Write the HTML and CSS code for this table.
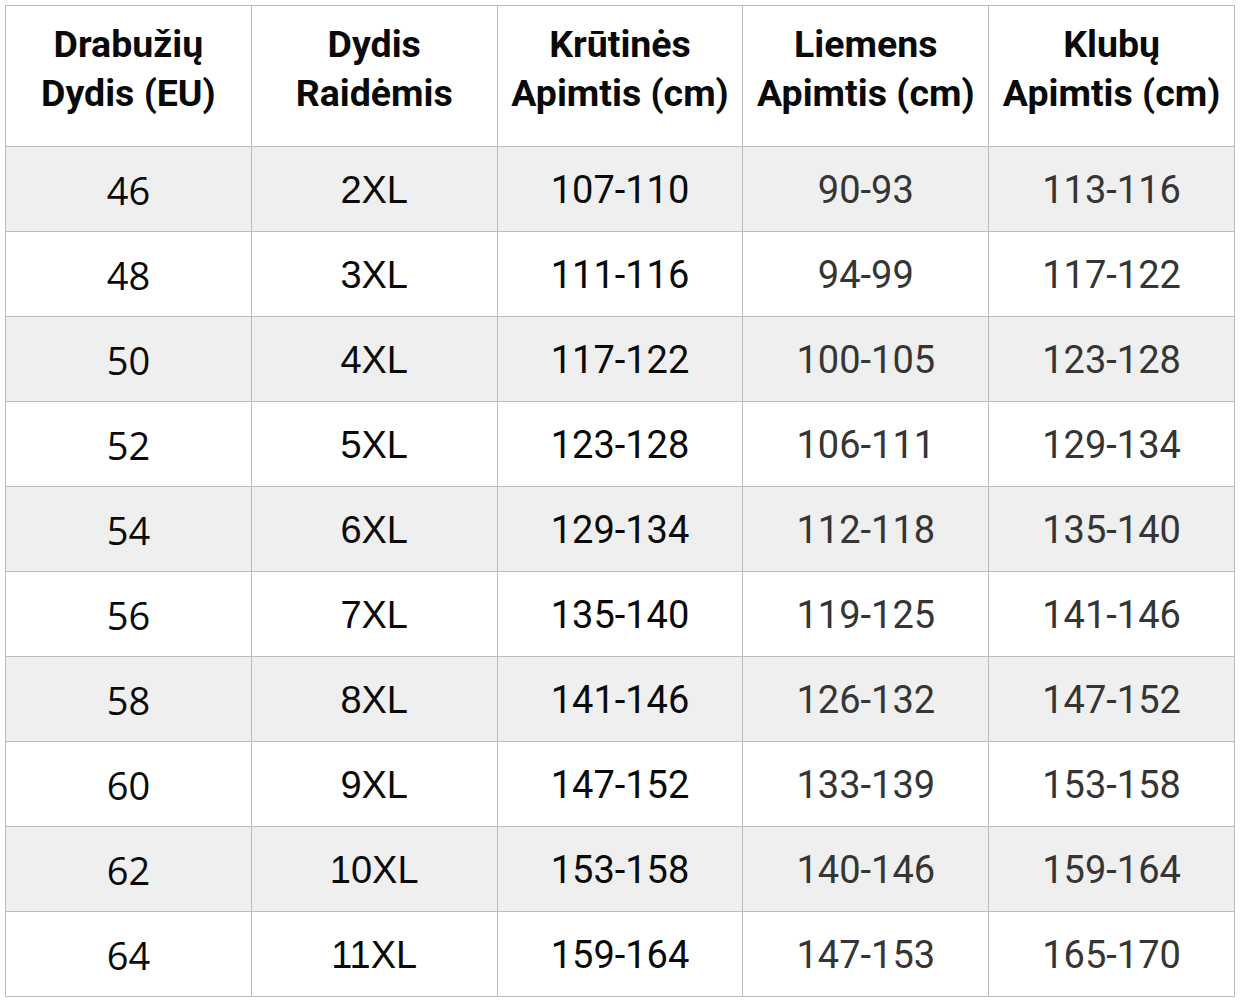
FILE: index.html
```html
<!DOCTYPE html>
<html lang="lt">
<head>
<meta charset="utf-8">
<title>Dydžių lentelė</title>
<link rel="stylesheet" href="styles.css">
</head>
<body>
<table class="size-table">
  <thead>
    <tr>
      <th>Drabužių<br>Dydis (EU)</th>
      <th>Dydis<br>Raidėmis</th>
      <th>Krūtinės<br>Apimtis (cm)</th>
      <th>Liemens<br>Apimtis (cm)</th>
      <th>Klubų<br>Apimtis (cm)</th>
    </tr>
  </thead>
  <tbody>
    <tr><td class="c1">46</td><td class="c2">2XL</td><td class="c3">107-110</td><td class="c4">90-93</td><td class="c4">113-116</td></tr>
    <tr><td class="c1">48</td><td class="c2">3XL</td><td class="c3">111-116</td><td class="c4">94-99</td><td class="c4">117-122</td></tr>
    <tr><td class="c1">50</td><td class="c2">4XL</td><td class="c3">117-122</td><td class="c4">100-105</td><td class="c4">123-128</td></tr>
    <tr><td class="c1">52</td><td class="c2">5XL</td><td class="c3">123-128</td><td class="c4">106-111</td><td class="c4">129-134</td></tr>
    <tr><td class="c1">54</td><td class="c2">6XL</td><td class="c3">129-134</td><td class="c4">112-118</td><td class="c4">135-140</td></tr>
    <tr><td class="c1">56</td><td class="c2">7XL</td><td class="c3">135-140</td><td class="c4">119-125</td><td class="c4">141-146</td></tr>
    <tr><td class="c1">58</td><td class="c2">8XL</td><td class="c3">141-146</td><td class="c4">126-132</td><td class="c4">147-152</td></tr>
    <tr><td class="c1">60</td><td class="c2">9XL</td><td class="c3">147-152</td><td class="c4">133-139</td><td class="c4">153-158</td></tr>
    <tr><td class="c1">62</td><td class="c2">10XL</td><td class="c3">153-158</td><td class="c4">140-146</td><td class="c4">159-164</td></tr>
    <tr><td class="c1">64</td><td class="c2">11XL</td><td class="c3">159-164</td><td class="c4">147-153</td><td class="c4">165-170</td></tr>
  </tbody>
</table>
</body>
</html>
```
FILE: styles.css
```css
html, body {
  margin: 0;
  padding: 0;
  background: #ffffff;
}
body {
  padding: 5px 0 0 5px;
}
.size-table {
  border-collapse: collapse;
  table-layout: fixed;
  width: 1230px;
  font-family: Roboto, "Liberation Sans", sans-serif;
}
.size-table th,
.size-table td {
  border: 1px solid #bcbcbc;
  text-align: center;
  vertical-align: middle;
  padding: 0;
  width: 20%;
  box-sizing: border-box;
}
.size-table th {
  height: 141px;
  font-size: 37.5px;
  font-weight: 700;
  line-height: 49px;
  color: #0a0a0a;
  padding-bottom: 14px;
}
.size-table td {
  height: 85px;
  font-size: 38px;
  line-height: 46px;
  font-weight: 400;
  padding-top: 2px;
}
.size-table tbody tr:nth-child(odd) td {
  background: #efefef;
}
.c1 {
  font-family: "Open Sans", "Noto Sans", sans-serif;
  color: #0a0a0a;
}
.c2 {
  font-family: "Liberation Sans", Arial, sans-serif;
  color: #0a0a0a;
}
.c3 {
  color: #0a0a0a;
}
.c4 {
  color: #353535;
}
```
